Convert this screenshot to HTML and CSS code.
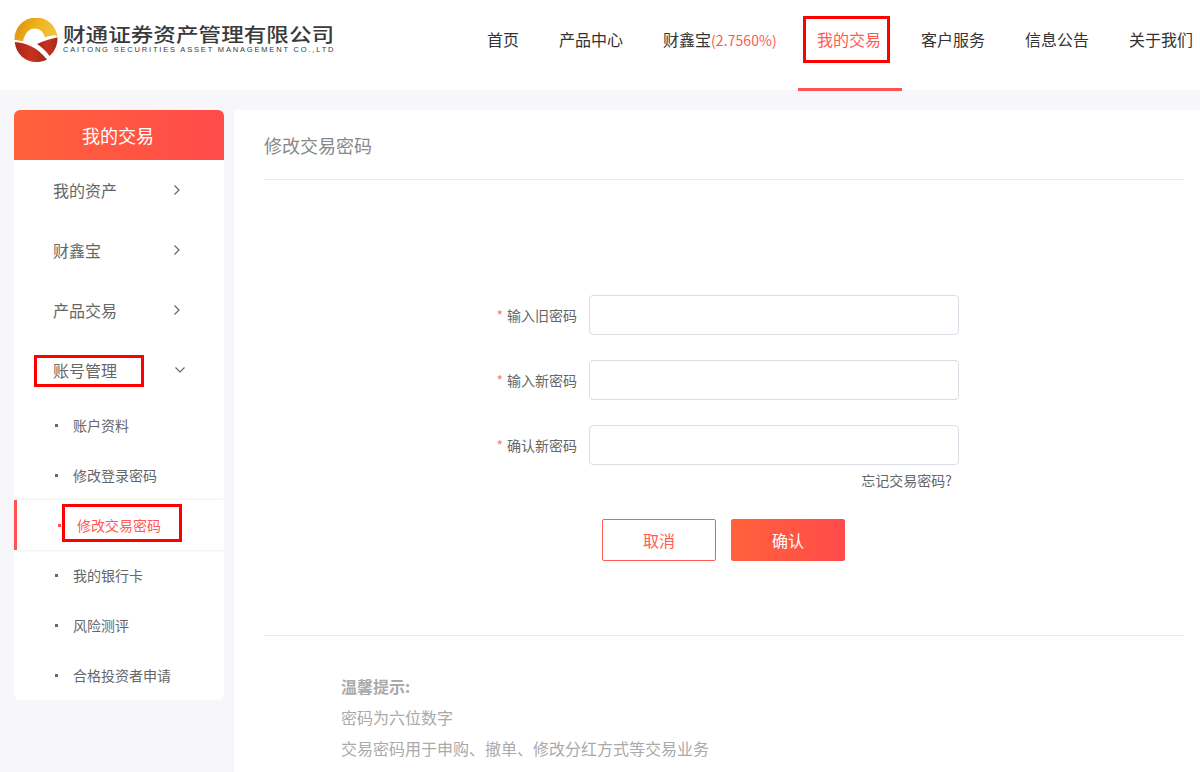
FILE: index.html
```html
<!DOCTYPE html>
<html lang="zh-CN">
<head>
<meta charset="utf-8">
<title>修改交易密码</title>
<link rel="stylesheet" href="styles.css">
</head>
<body>
<header class="top">
  <div class="logo">
    <svg class="logo-mark" viewBox="0 0 44 44" width="44" height="44">
      <defs>
        <linearGradient id="lg1" x1="0" y1="0" x2="1" y2="0.3"><stop offset="0" stop-color="#d98a0c"/><stop offset="0.6" stop-color="#f0b51e"/><stop offset="1" stop-color="#eec23e"/></linearGradient>
        <linearGradient id="lg2" x1="0" y1="0" x2="1" y2="0"><stop offset="0" stop-color="#a7251a"/><stop offset="0.5" stop-color="#c8321f"/><stop offset="1" stop-color="#a52a18"/></linearGradient>
      </defs>
      <path d="M0.500 22A21.500 21.500 0 0 1 43.500 20L41.500 17C38 17.500 34 18 31 19.500C29.500 14 26 10.500 21 10.500C15.500 10.500 10.500 15 9 23.500C6 22.500 3 22 0.500 22Z" fill="url(#lg1)"/>
      <path d="M0.800 24C11 24.500 23 29 33 41.500C29.500 43.500 25.500 44 22 44A21.500 21.500 0 0 1 0.800 24Z" fill="url(#lg2)"/>
      <path d="M23 26C30 23 37 20.500 43.500 19.500C43.800 27 40.500 34 35.500 38C32.500 33.500 28.500 29.500 23 26Z" fill="url(#lg2)"/>
    </svg>
    <div class="logo-text">
      <div class="logo-cn">财通证券资产管理有限公司</div>
      <div class="logo-en">CAITONG SECURITIES ASSET MANAGEMENT CO.,LTD</div>
    </div>
  </div>
  <nav class="nav">
    <a class="nav-item">首页</a>
    <a class="nav-item">产品中心</a>
    <a class="nav-item">财鑫宝<span class="rate">(2.7560%)</span></a>
    <a class="nav-item active">我的交易<i class="mark mark-nav"></i></a>
    <a class="nav-item">客户服务</a>
    <a class="nav-item">信息公告</a>
    <a class="nav-item">关于我们</a>
  </nav>
</header>
<div class="page">
  <aside class="side">
    <div class="side-head">我的交易</div>
    <div class="menu-row"><span>我的资产</span><svg class="chev" viewBox="0 0 8 12" width="8" height="12"><path d="M1.500 1.500L6 6L1.500 10.500"/></svg></div>
    <div class="menu-row"><span>财鑫宝</span><svg class="chev" viewBox="0 0 8 12" width="8" height="12"><path d="M1.500 1.500L6 6L1.500 10.500"/></svg></div>
    <div class="menu-row"><span>产品交易</span><svg class="chev" viewBox="0 0 8 12" width="8" height="12"><path d="M1.500 1.500L6 6L1.500 10.500"/></svg></div>
    <div class="menu-row open"><span>账号管理</span><svg class="chev-down" viewBox="0 0 12 8" width="12" height="8"><path d="M1.500 1.500L6 6L10.500 1.500"/></svg><i class="mark mark-menu"></i></div>
    <div class="sub">账户资料</div>
    <div class="sub">修改登录密码</div>
    <div class="sub current">修改交易密码<i class="mark mark-sub"></i></div>
    <div class="sub">我的银行卡</div>
    <div class="sub">风险测评</div>
    <div class="sub">合格投资者申请</div>
  </aside>
  <main class="main">
    <h1 class="title">修改交易密码</h1>
    <form class="form">
      <div class="field"><label class="label"><em>*</em>输入旧密码</label><input class="input" type="password"></div>
      <div class="field"><label class="label"><em>*</em>输入新密码</label><input class="input" type="password"></div>
      <div class="field"><label class="label"><em>*</em>确认新密码</label><input class="input" type="password"></div>
      <div class="forgot"><a>忘记交易密码?</a></div>
      <div class="actions">
        <button class="btn ghost" type="button">取消</button>
        <button class="btn solid" type="button">确认</button>
      </div>
    </form>
    <section class="tips">
      <p class="tips-head">温馨提示:</p>
      <p>密码为六位数字</p>
      <p>交易密码用于申购、撤单、修改分红方式等交易业务</p>
    </section>
  </main>
</div>
</body>
</html>
```
FILE: styles.css
```css
* { box-sizing: border-box; }
html, body { margin: 0; padding: 0; height: 772px; overflow: hidden; }
body {
  background: #f6f6fb;
  font-family: "Noto Sans CJK SC", "Liberation Sans", sans-serif;
  color: #333;
}
.top {
  height: 90px;
  background: #fff;
  display: flex;
  align-items: flex-start;
  justify-content: space-between;
  padding-left: 14px;
}
.logo { display: flex; align-items: flex-start; padding-top: 18px; }
.logo-mark { display: block; flex: none; }
.logo-text { margin-left: 5px; padding-top: 6px; }
.logo-cn {
  font-size: 22.6px;
  line-height: 21px;
  font-weight: 500;
  color: #3a3a3a;
  white-space: nowrap;
  transform: scaleY(0.84);
}
.logo-en {
  font-family: "Liberation Sans", sans-serif;
  font-size: 7.5px;
  line-height: 8px;
  letter-spacing: 1.82px;
  color: #3a3a3a;
  white-space: nowrap;
  margin-top: 1px;
}
.nav { display: flex; margin-right: -13px; }
.nav-item {
  position: relative;
  display: block;
  height: 91px;
  padding: 0 20px;
  font-size: 16px;
  line-height: 79px;
  color: #333;
  white-space: nowrap;
}
.rate { color: #ff5b4d; font-size: 14px; letter-spacing: 0.1px; }
.nav-item.active { color: #ff5b52; }
.nav-item.active::after {
  content: "";
  position: absolute;
  left: 1px;
  right: -1px;
  bottom: 0;
  height: 3px;
  background: #ff5252;
}
.mark { position: absolute; display: block; border: 3px solid #f00; pointer-events: none; }
.mark-nav { left: 6px; top: 16px; width: 87px; height: 47px; }
.page { display: flex; align-items: flex-start; padding: 20px 0 0 14px; }
.side {
  width: 210px;
  flex: none;
  background: #fff;
  border-radius: 6px;
}
.side-head {
  height: 50px;
  border-radius: 6px 6px 0 0;
  background: linear-gradient(90deg, #ff623a, #ff4b4b);
  color: #fff;
  font-size: 18px;
  line-height: 50px;
  text-align: center;
  padding-right: 2px;
}
.menu-row {
  position: relative;
  height: 60px;
  display: flex;
  align-items: center;
  padding-left: 39px;
  font-size: 16px;
  color: #666;
}
.menu-row span { width: 120px; }
.chev, .chev-down { fill: none; stroke: #666; stroke-width: 1.200; }
.chev-down { margin-left: 1px; }
.mark-menu { left: 20px; top: 15px; width: 110px; height: 32px; }
.sub {
  position: relative;
  height: 50px;
  line-height: 50px;
  padding-left: 59px;
  font-size: 14px;
  color: #666;
}
.sub::before {
  content: "";
  position: absolute;
  left: 41px;
  top: 24px;
  width: 3px;
  height: 3px;
  background: #666;
}
.sub.current {
  padding-left: 60px;
  line-height: 51px;
  color: #ff5b52;
  border-left: 3px solid #ff5252;
  box-shadow: 0 0 3px rgba(0, 0, 0, 0.12);
  clip-path: inset(-4px 0 -4px 0);
}
.sub.current::before { background: #ff5252; }
.mark-sub { left: 45px; top: 4px; width: 120px; height: 38px; }
.main {
  flex: none;
  width: 966px;
  margin-left: 10px;
  height: 662px;
  background: #fff;
  padding: 0 16px 0 30px;
}
.title {
  margin: 0;
  height: 70px;
  border-bottom: 1px solid #e9e9ee;
  font-size: 18px;
  font-weight: 400;
  line-height: 70px;
  color: #888;
}
.form {
  height: 456px;
  border-bottom: 1px solid #e9e9ee;
  padding-top: 115px;
}
.field { display: flex; align-items: center; height: 40px; margin-bottom: 25px; }
.field:nth-child(3) { margin-bottom: 0; }
.label {
  width: 313px;
  text-align: right;
  font-size: 14px;
  color: #666;
}
.label em { font-style: normal; color: #ff7a70; margin-right: 4px; }
.input {
  margin-left: 12px;
  width: 370px;
  height: 40px;
  border: 1px solid #dcdce6;
  border-radius: 4px;
  background: #fff;
  outline: none;
}
.forgot {
  width: 688px;
  margin-top: 5px;
  height: 20px;
  line-height: 20px;
  text-align: right;
  font-size: 14px;
  color: #666;
}
.actions { display: flex; gap: 15px; margin: 29px 0 0 338px; }
.btn {
  width: 114px;
  height: 42px;
  border-radius: 2px;
  font-family: inherit;
  font-size: 16px;
  padding: 0;
}
.ghost { background: #fff; border: 1px solid #ff5b52; color: #ff5b52; }
.solid { border: 0; color: #fff; background: linear-gradient(90deg, #ff623a, #ff4b4b); }
.tips { padding: 35px 0 0 77px; font-size: 16px; line-height: 31px; color: #aaa; }
.tips p { margin: 0; }
.tips-head { font-weight: 700; }
```
